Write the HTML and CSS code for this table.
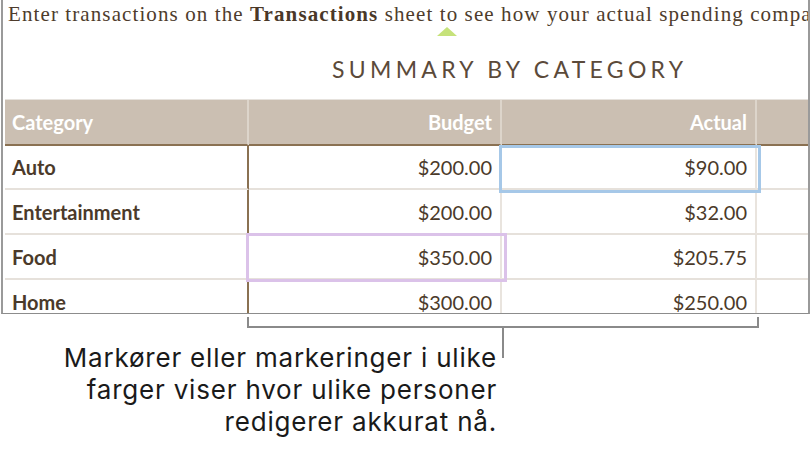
FILE: index.html
```html
<!DOCTYPE html>
<html>
<head>
<meta charset="utf-8">
<link rel="stylesheet" href="styles.css">
</head>
<body>
<div class="frame">
  <p class="intro">Enter transactions on the <b>Transactions</b> sheet to see how your actual spending compares to your budget.</p>
  <span class="cursor-mark"></span>
  <h1 class="title">SUMMARY BY CATEGORY</h1>
  <div class="table">
    <div class="cell head cat">Category</div>
    <div class="cell head num">Budget</div>
    <div class="cell head num">Actual</div>
    <div class="cell head extra"></div>

    <div class="cell cat">Auto</div>
    <div class="cell num">$200.00</div>
    <div class="cell num">$90.00</div>
    <div class="cell extra"></div>

    <div class="cell cat">Entertainment</div>
    <div class="cell num">$200.00</div>
    <div class="cell num">$32.00</div>
    <div class="cell extra"></div>

    <div class="cell cat">Food</div>
    <div class="cell num">$350.00</div>
    <div class="cell num">$205.75</div>
    <div class="cell extra"></div>

    <div class="cell cat">Home</div>
    <div class="cell num">$300.00</div>
    <div class="cell num">$250.00</div>
    <div class="cell extra"></div>
  </div>
  <div class="sel sel-blue"></div>
  <div class="sel sel-purple"></div>
</div>
<div class="bracket"></div>
<p class="caption">Markører eller markeringer i ulike<br>farger viser hvor ulike personer<br>redigerer akkurat nå.</p>
</body>
</html>
```

FILE: styles.css
```css
html, body {
  margin: 0;
  padding: 0;
  background: #ffffff;
}
body {
  width: 811px;
  height: 455px;
  overflow: hidden;
}
.frame {
  position: relative;
  box-sizing: border-box;
  margin-left: 1px;
  width: 809px;
  height: 314px;
  border-left: 2px solid #9a9a9a;
  border-right: 2px solid #9a9a9a;
  border-bottom: 1px solid #8c8c8c;
  overflow: hidden;
}
.intro {
  margin: 0;
  padding: 0 0 0 5px;
  height: 28px;
  line-height: 28px;
  font-family: "Liberation Serif", serif;
  font-size: 21px;
  letter-spacing: 1.1px;
  color: #4e3c2c;
  white-space: nowrap;
  overflow: hidden;
}
.intro b {
  color: #4a3828;
}
.cursor-mark {
  position: absolute;
  left: 434px;
  top: 27px;
  width: 0;
  height: 0;
  border-left: 10px solid transparent;
  border-right: 10px solid transparent;
  border-bottom: 9px solid #c6e27a;
}
.title {
  margin: 0;
  padding: 28px 0 0 329px;
  height: 43px;
  line-height: 26px;
  font-family: Lato, "Open Sans", sans-serif;
  font-weight: 400;
  font-size: 23px;
  letter-spacing: 4.3px;
  color: #5b4a3a;
  white-space: nowrap;
}
.table {
  margin-left: 2px;
  display: grid;
  grid-template-columns: 244px 253px 255px 1fr;
  grid-auto-rows: 45px;
  border-top: 1px solid #e6e2dd;
  font-family: Lato, "Open Sans", sans-serif;
  font-size: 20px;
  color: #4b3a2a;
}
.cell {
  box-sizing: border-box;
  display: flex;
  align-items: center;
  padding: 0 8px;
  border-bottom: 2px solid #e6e1db;
  border-right: 2px solid #e9e4de;
  white-space: nowrap;
}
.cell.num {
  justify-content: flex-end;
}
.cell.cat {
  font-weight: 700;
  padding-left: 7px;
  border-right: 2px solid #8a7152;
}
.cell.head {
  height: 46px;
  background: #cbbfb2;
  color: #ffffff;
  font-weight: 700;
  border-bottom: 2px solid #8a7152;
  border-right: 2px solid #ddd5cb;
}
.cell.extra {
  border-right: none;
}
.sel {
  position: absolute;
  box-sizing: border-box;
  border: 3px solid;
}
.sel-blue {
  left: 496px;
  top: 145px;
  width: 262px;
  height: 48px;
  border-color: #a6c8e8;
}
.sel-purple {
  left: 243px;
  top: 233px;
  width: 261px;
  height: 49px;
  border-color: #dbc2e9;
}
.bracket {
  position: relative;
  box-sizing: border-box;
  margin: 3px 0 0 247px;
  width: 512px;
  height: 11px;
  border-left: 2px solid #8a8a8a;
  border-right: 2px solid #8a8a8a;
  border-bottom: 2px solid #8a8a8a;
}
.bracket::after {
  content: "";
  position: absolute;
  left: 253px;
  top: 100%;
  width: 2px;
  height: 32px;
  background: #8a8a8a;
}
.caption {
  margin: 14px 0 0 0;
  width: 497px;
  text-align: right;
  font-family: Inter, Roboto, "Liberation Sans", sans-serif;
  font-size: 26px;
  letter-spacing: 0.8px;
  line-height: 32px;
  color: #1a1a1a;
}
```
